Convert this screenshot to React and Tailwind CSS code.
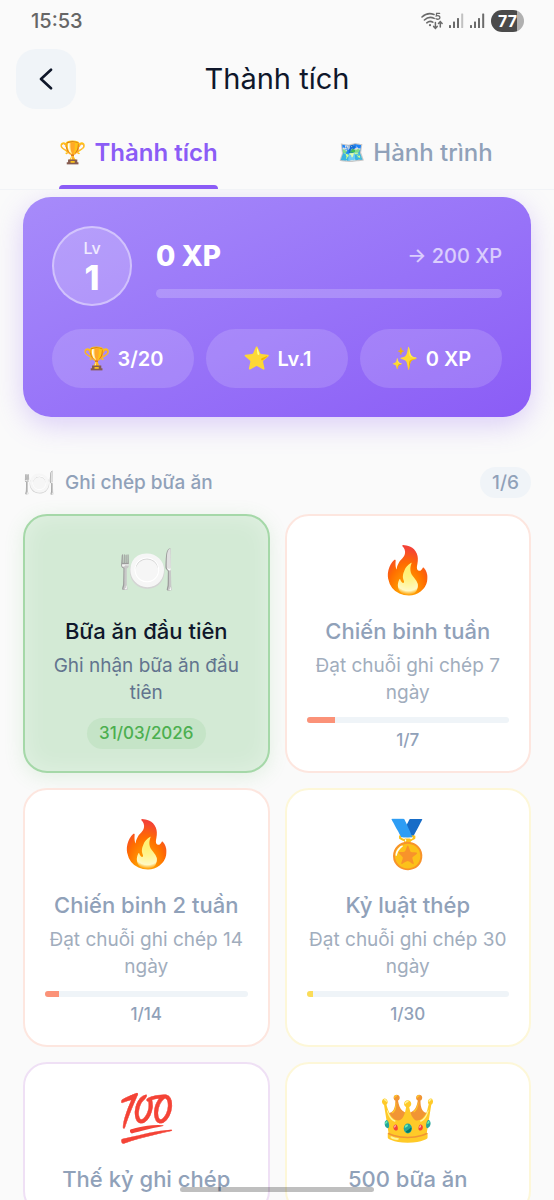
import React, { useState } from 'react';
import clsx from 'clsx';

const tabs = [
  { id: 'achievements', icon: '🏆', label: 'Thành tích' },
  { id: 'journey', icon: '🗺️', label: 'Hành trình' },
];

const stats = [
  { icon: '🏆', label: '3/20' },
  { icon: '⭐', label: 'Lv.1' },
  { icon: '✨', label: '0 XP' },
];

const achievements = [
  { icon: '🍽️', title: 'Bữa ăn đầu tiên', desc: 'Ghi nhận bữa ăn đầu tiên', date: '31/03/2026' },
  { icon: '🔥', title: 'Chiến binh tuần', desc: 'Đạt chuỗi ghi chép 7 ngày', value: 1, goal: 7, border: 'border-[#fde6df]', bar: 'bg-[#fb9278]' },
  { icon: '🔥', title: 'Chiến binh 2 tuần', desc: 'Đạt chuỗi ghi chép 14 ngày', value: 1, goal: 14, border: 'border-[#fde6df]', bar: 'bg-[#fb9278]' },
  { icon: '🏅', title: 'Kỷ luật thép', desc: 'Đạt chuỗi ghi chép 30 ngày', value: 1, goal: 30, border: 'border-[#fdf7d8]', bar: 'bg-[#fbdc58]' },
  { icon: '💯', title: 'Thế kỷ ghi chép', border: 'border-[#efe0f5]' },
  { icon: '👑', title: '500 bữa ăn', border: 'border-[#fdf7d8]' },
];

const Signal = ({ weak }) => (
  <svg width="15" height="15" viewBox="0 0 15 15" fill="#6b6b6b" aria-hidden="true">
    <rect x="0" y="12" width="2" height="3" rx="0.5" />
    <rect x="4" y="8.5" width="2" height="6.5" rx="0.5" />
    <rect x="8" y="5" width="2" height="10" rx="0.5" />
    <rect x="12.2" y="0.5" width="2" height="14.5" rx="0.5" opacity={weak ? 0.4 : 1} />
  </svg>
);

const WifiIcon = () => (
  <svg width="22" height="18" viewBox="0 0 22 18" fill="none" stroke="#6b6b6b" strokeWidth="1.6" strokeLinecap="round" aria-hidden="true">
    <path d="M1 5C4.6 1.6 9 1 13 2.4" />
    <path d="M3.4 8C6.4 5.2 10.2 4.8 13.2 6.4" />
    <path d="M5.8 10.8C7.6 9.2 10 9 11.8 10.2" />
    <circle cx="9" cy="13.2" r="1.1" fill="#6b6b6b" stroke="none" />
    <path d="M18.6 1.4H15.6L15.3 4C17 3.2 18.9 3.8 18.9 5.4C18.9 7.2 16.6 7.8 15 6.7" strokeWidth="1.3" />
    <path d="M14.4 10.6V16M12.6 14.4L14.4 16.3L16.2 14.4" strokeWidth="1.5" />
    <path d="M19.3 15V10M17.5 11.4L19.3 9.5L21.1 11.4" strokeWidth="1.5" />
  </svg>
);

const StatusBar = () => (
  <div className="flex h-[41px] items-center justify-between pl-[31px] pr-[30px]">
    <span className="text-xl font-medium text-[#666666]">15:53</span>
    <div className="flex items-center gap-[6px]">
      <WifiIcon />
      <Signal weak />
      <Signal />
      <span className="flex h-[22px] w-[33px] items-center justify-center rounded-full bg-linear-to-r from-[#4b4b4b] from-78% to-[#b0b0b0] to-78% text-base font-bold text-white">
        77
      </span>
    </div>
  </div>
);

const LevelCard = () => (
  <section className="rounded-[28px] bg-linear-to-br from-[#a78bfa] to-[#8b5cf6] p-[29px] text-white shadow-[0_8px_28px_rgba(139,92,246,0.28)]">
    <div className="flex items-center gap-6">
      <div className="flex size-20 shrink-0 flex-col items-center justify-center rounded-full border-2 border-white/40 bg-white/20">
        <span className="text-base leading-6 font-medium text-white/80">Lv</span>
        <span className="text-[34px] leading-9 font-extrabold">1</span>
      </div>
      <div className="flex-1">
        <div className="mb-3 flex h-[43px] items-center justify-between">
          <span className="text-[28px] font-extrabold">0 XP</span>
          <span className="text-xl font-medium text-white/65">→ 200 XP</span>
        </div>
        <div className="h-[9px] rounded-full bg-white/20" />
      </div>
    </div>
    <div className="mt-[23px] grid grid-cols-3 gap-3">
      {stats.map((stat) => (
        <div key={stat.icon} className="flex h-[59px] items-center justify-center gap-2 rounded-[30px] bg-white/15 text-xl font-semibold">
          <span className="text-[22px]">{stat.icon}</span>
          <span>{stat.label}</span>
        </div>
      ))}
    </div>
  </section>
);

const AchievementCard = ({ item }) => {
  const unlocked = Boolean(item.date);

  return (
    <article
      className={clsx(
        'flex flex-col items-center rounded-3xl border-2 px-5 pt-6 pb-[19px] text-center',
        unlocked
          ? 'border-[#a5d8a8] bg-[#d3ead5] shadow-[0_4px_20px_rgba(76,175,80,0.14),inset_0_0_24px_rgba(255,255,255,0.35)]'
          : ['bg-white', item.border]
      )}
    >
      <span className="text-[46px] leading-[58px]">{item.icon}</span>
      <h3 className={clsx('mt-[18px] text-[22px] leading-[30px] font-medium', unlocked ? 'text-slate-900' : 'text-slate-400')}>
        {item.title}
      </h3>
      {item.desc && (
        <p className={clsx('mt-[6px] text-[19px] leading-[27px]', unlocked ? 'text-slate-500' : 'text-[#a1adbd]')}>{item.desc}</p>
      )}
      {unlocked && (
        <span className="mt-3 rounded-full bg-[#c5e4c7] px-3 text-[17px] leading-[31px] font-medium text-[#4caf50]">{item.date}</span>
      )}
      {item.goal && (
        <>
          <div className="mt-[11px] h-[6px] w-full overflow-hidden rounded-full bg-[#eff4f8]">
            <div className={clsx('h-full', item.bar)} style={{ width: `${(item.value / item.goal) * 100}%` }} />
          </div>
          <span className="mt-[5px] text-[17px] leading-6 font-medium text-slate-400">
            {item.value}/{item.goal}
          </span>
        </>
      )}
    </article>
  );
};

export default function App() {
  const [activeTab, setActiveTab] = useState('achievements');

  return (
    <div className="flex h-screen flex-col overflow-hidden bg-[#fafafa] font-['Inter','Noto_Sans',sans-serif]">
      <StatusBar />

      <header className="grid grid-cols-[60px_1fr_60px] items-center px-4 py-2">
        <button type="button" aria-label="Quay lại" className="flex size-[60px] items-center justify-center rounded-[20px] bg-[#f0f4f8]">
          <svg width="14" height="22" viewBox="0 0 14 22" fill="none" stroke="#0f172a" strokeWidth="2.6" strokeLinecap="round" strokeLinejoin="round" aria-hidden="true">
            <path d="M12 1.7L2 11L12 20.3" />
          </svg>
        </button>
        <h1 className="text-center text-[29px] text-slate-900">Thành tích</h1>
      </header>

      <nav className="grid grid-cols-2 border-b border-[#f1f3f6]">
        {tabs.map((tab) => (
          <button
            key={tab.id}
            type="button"
            onClick={() => setActiveTab(tab.id)}
            className={clsx(
              'relative mx-auto flex h-[72px] items-center gap-2 text-2xl',
              activeTab === tab.id ? 'font-semibold text-[#8b5cf6]' : 'font-medium text-slate-400'
            )}
          >
            <span className="text-[22px]">{tab.icon}</span>
            <span>{tab.label}</span>
            {activeTab === tab.id && <span className="absolute inset-x-0 bottom-0 h-1 rounded-t bg-[#8b5cf6]" />}
          </button>
        ))}
      </nav>

      <main className="flex-1 overflow-y-auto px-[23px] pt-[7px] [scrollbar-width:none]">
        <LevelCard />

        <section className="mt-[50px]">
          <div className="mb-4 flex items-center justify-between">
            <h2 className="flex items-center gap-[10px] text-[19px] leading-[31px] font-medium text-slate-400">
              <span className="text-[26px]">🍽️</span>
              <span>Ghi chép bữa ăn</span>
            </h2>
            <span className="rounded-full bg-[#f0f4f8] px-3 text-[19px] leading-[31px] font-medium text-slate-400">1/6</span>
          </div>
          <div className="grid grid-cols-2 gap-[15px]">
            {achievements.map((item) => (
              <AchievementCard key={item.title} item={item} />
            ))}
          </div>
        </section>
      </main>

      {/* Home indicator */}
      <div className="fixed inset-x-0 bottom-2 mx-auto h-[5px] w-[35%] rounded-full bg-black/25" />
    </div>
  );
}
